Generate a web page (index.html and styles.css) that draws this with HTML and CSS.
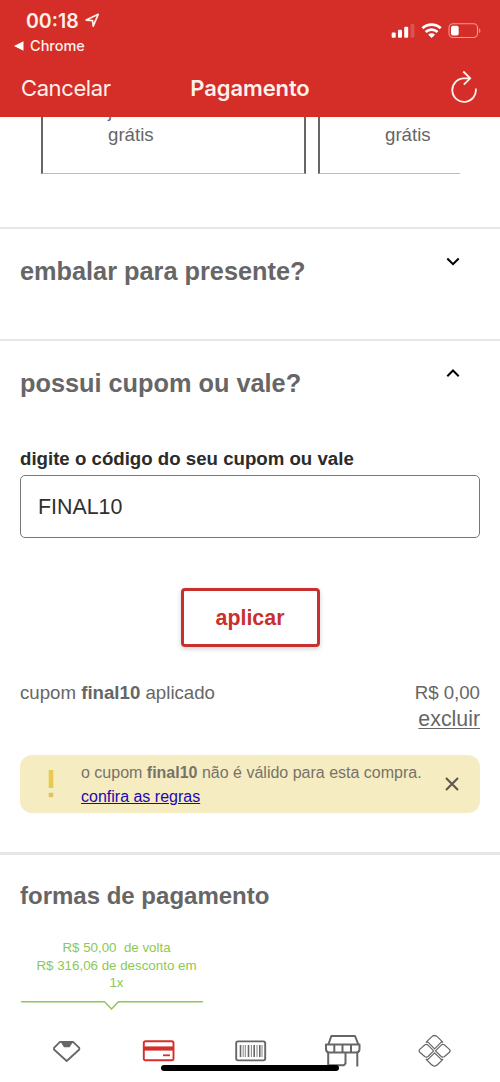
FILE: index.html
```html
<!DOCTYPE html>
<html lang="pt-BR">
<head>
<meta charset="utf-8">
<meta name="viewport" content="width=device-width, initial-scale=1">
<title>Pagamento</title>
<link rel="stylesheet" href="styles.css">
</head>
<body>
<div class="screen">
  <header class="header">
    <div class="status">
      <div class="status-left">
        <div class="clock"><span>00:18</span>
          <svg width="15" height="15" viewBox="0 0 15 15"><path d="M1.2 7.1 13.2 1.3 8.2 13.2 7.6 7.6Z" fill="none" stroke="#fff0e6" stroke-width="1.7" stroke-linejoin="round"/></svg>
        </div>
        <div class="back-app">
          <svg width="10" height="10" viewBox="0 0 10 10"><path d="M0 5 9.5 .2v9.6Z" fill="#fff"/></svg>
          <span>Chrome</span>
        </div>
      </div>
      <svg class="status-icons" width="90" height="18" viewBox="391 22 90 18">
        <g fill="#fff"><rect x="391.7" y="32.5" width="4" height="5.3" rx="1"/><rect x="398" y="29.7" width="4" height="8.1" rx="1"/><rect x="404.2" y="26.7" width="4" height="11.1" rx="1"/><rect x="410.5" y="24" width="4" height="13.8" rx="1" opacity=".18"/></g>
        <g fill="none" stroke="#fff" stroke-width="2.7"><path d="M422.5 28.3a13 13 0 0 1 18.2 0M425.7 32a8.4 8.4 0 0 1 11.8 0"/></g>
        <path d="M428.2 34.7a4.8 4.8 0 0 1 6.8 0l-3.4 3.4Z" fill="#fff"/>
        <rect x="449" y="23.8" width="28.5" height="13.7" rx="4" fill="none" stroke="#ee9b96" stroke-width="1.1"/>
        <rect x="451" y="25.8" width="7.7" height="9.8" rx="2" fill="#fff"/><path d="M479.3 28.6q1.7 2 0 4Z" fill="#ee9b96" stroke="#ee9b96" stroke-width=".6"/>
      </svg>
    </div>
    <nav class="navbar">
      <span class="cancel">Cancelar</span>
      <h1>Pagamento</h1>
      <svg class="reload" width="28" height="34" viewBox="450 69 28 34"><path d="M470.2 78.3H463.8A11.8 11.8 0 1 0 475.8 88.5M463.3 71.5 470.2 78.3 463.8 84.7" fill="none" stroke="#fff4ed" stroke-width="1.8"/></svg>
    </nav>
  </header>

  <section class="shipping">
    <div class="ship-card"><span>j<br>grátis</span></div>
    <div class="ship-card next"><span>&nbsp;<br>grátis</span></div>
  </section>

  <section class="accordion gift">
    <h2>embalar para presente?</h2>
    <svg class="chevron" width="14" height="9" viewBox="0 0 14 9"><path d="M1.3 1.5 7 7.2l5.7-5.7" fill="none" stroke="#000" stroke-width="2"/></svg>
  </section>

  <section class="coupon">
    <div class="accordion">
      <h2>possui cupom ou vale?</h2>
      <svg class="chevron" width="14" height="9" viewBox="0 0 14 9"><path d="M1.3 7.2 7 1.5l5.7 5.7" fill="none" stroke="#000" stroke-width="2"/></svg>
    </div>
    <div class="label">digite o código do seu cupom ou vale</div>
    <div class="input">FINAL10</div>
    <div class="apply">aplicar</div>
    <div class="applied">
      <div>cupom <b>final10</b> aplicado</div>
      <div class="amount">R$ 0,00<br><span class="remove">excluir</span></div>
    </div>
    <div class="alert">
      <svg class="bang" width="6" height="28" viewBox="0 0 6 28"><path d="M.7 0h4.6v18H.7Z" fill="#e8cb4c"/><path d="M.7 22.8h4.6v4.4H.7Z" fill="#dfc45c"/></svg>
      <div class="alert-text">o cupom <b>final10</b> não é válido para esta compra.<br><a href="#">confira as regras</a></div>
      <svg class="close" width="14" height="14" viewBox="0 0 14 14"><path d="m1 1 12 12M13 1 1 13" stroke="#5e5a50" stroke-width="2.2"/></svg>
    </div>
  </section>

  <section class="payment">
    <h2>formas de pagamento</h2>
    <div class="offer">
      <p>R$ 50,00&nbsp; de volta<br>R$ 316,06 de desconto em<br>1x</p>
      <svg width="184" height="10" viewBox="0 0 184 10"><path d="M1 1.8H84.5L91.5 9 98.5 1.8H183" fill="none" stroke="#8cc855" stroke-width="1.4"/></svg>
    </div>
    <div class="methods">
      <svg viewBox="44 1030 46 42"><path d="M61 1041.8H73L79.3 1047.8V1049.5L66.7 1061 54 1049.5V1047.8L60 1041.8Z" fill="none" stroke="#666" stroke-width="1.8" stroke-linejoin="round"/><path d="M60.5 1041.8H73.2L69.5 1047.3H64Z" fill="#666"/></svg>
      <svg viewBox="136 1030 46 42"><rect x="143.8" y="1041.3" width="29.7" height="19" rx="1.8" fill="none" stroke="#d52f2b" stroke-width="1.9"/><path d="M143.5 1046.4H174V1050.6H143.5Z" fill="#d52f2b"/><path d="M163 1055.3H170" stroke="#d52f2b" stroke-width="1.8"/></svg>
      <svg viewBox="228 1030 46 42"><rect x="236.2" y="1041.4" width="29" height="19" rx="1.8" fill="none" stroke="#666" stroke-width="1.9"/><path d="M240.5 1045V1057M248.5 1045V1057M254.2 1045V1057M259.8 1045V1057" stroke="#666" stroke-width="1.6"/><path d="M243.2 1045V1057M245.3 1045V1057M251.4 1045V1057M257 1045V1057M262 1045V1057" stroke="#666" stroke-width=".8"/></svg>
      <svg viewBox="320 1030 46 42"><g fill="none" stroke="#666" stroke-width="2" stroke-linejoin="round"><path d="M328.5 1044.3 331.3 1036H355L358.3 1044.3"/><path d="M326 1044.5H359.5V1049.5Q359 1052.5 356 1052.5H329.5Q326.5 1052.5 326 1049.5ZM334.3 1044.5V1052.3M342.5 1044.5V1052.3M351 1044.5V1052.3"/><path d="M328.2 1052.5V1065.2H343.8L345.5 1063.5V1052.5M357.3 1052.5V1066.5"/></g></svg>
      <svg viewBox="412 1030 46 42"><g fill="none" stroke="#666" stroke-width="1.2" stroke-linejoin="round"><path d="M426.2 1042.2 431.3 1037.1Q434.5 1033.9 437.7 1037.1L442.8 1042.2H441.2L434.6 1048.8 428 1042.2Z"/><path d="M426.2 1059.4 431.3 1064.5Q434.5 1067.7 437.7 1064.5L442.8 1059.4H441.2L434.6 1052.8 428 1059.4Z"/><path d="M433.7 1050.8 428 1056.5Q426.8 1057.6 425 1056.8L420 1052.5Q418.3 1050.8 420 1049.1L425 1044.8Q426.8 1044 428 1045.1Z"/><path d="M435.5 1050.8 441.2 1056.5Q442.4 1057.6 444.2 1056.8L449.2 1052.5Q450.9 1050.8 449.2 1049.1L444.2 1044.8Q442.4 1044 441.2 1045.1Z"/></g></svg>
    </div>
  </section>
  <div class="home-indicator"></div>
</div>
</body>
</html>
```
FILE: styles.css
```css
* { box-sizing: border-box; }
body { margin: 0; background: #fff; }
h1, h2, p { margin: 0; }
svg { display: block; flex: none; }

.screen {
  position: relative;
  width: 500px;
  height: 1082px;
  overflow: hidden;
  background: #fff;
  color: #666;
  font-family: "Liberation Sans", Arial, sans-serif;
  font-size: 18.67px;
}

.header {
  height: 117px;
  background: #d52d28;
  color: #fff0e9;
  font-family: Inter, sans-serif;
}
.status { display: flex; justify-content: space-between; height: 59px; padding: 10px 19px 0 14px; }
.clock { display: flex; align-items: center; gap: 6px; height: 22px; padding-left: 12px; font-size: 19.5px; font-weight: 600; }
.clock svg { margin-top: -2px; }
.back-app { display: flex; align-items: center; gap: 6px; height: 27px; font-size: 14.5px; font-weight: 500; }
.status-icons { margin-top: 12px; }
.navbar { display: grid; grid-template-columns: 1fr auto 1fr; align-items: center; height: 57px; padding: 0 22px; font-size: 22px; }
.cancel { margin-left: -1px; letter-spacing: -.4px; }
.navbar h1 { font-size: 22px; font-weight: 600; letter-spacing: -.1px; }
.reload { justify-self: end; margin-bottom: 4px; }

.shipping {
  display: flex;
  gap: 12px;
  height: 57px;
  margin-left: 41px;
  width: 419px;
  overflow: hidden;
}
.ship-card {
  display: flex;
  align-items: flex-end;
  flex: none;
  width: 265px;
  height: 57px;
  padding: 0 0 26px 65px;
  border: solid #666;
  border-width: 0 2px 1px;
  border-bottom-color: #bbb;
  line-height: 24px;
}
.ship-card.next { width: 266px; }

.accordion { display: flex; justify-content: space-between; }
h2 { font-size: 25.3px; font-weight: 700; line-height: 30px; }
.chevron { margin-right: 20px; }
.gift { height: 112px; margin-top: 53px; padding: 27px 20px 0; border-top: 2px solid #e8e8e8; }
.gift .chevron { margin-top: 1px; }
.coupon { height: 513px; padding: 27px 20px 0; border-top: 2px solid #e8e8e8; }
.coupon .chevron { margin-top: 1px; }
.label { margin-top: 50px; color: #2b2b2b; font-weight: 700; line-height: 22px; }
.input {
  height: 63px;
  margin-top: 5px;
  padding-left: 17px;
  border: 1px solid #777;
  border-radius: 5px;
  color: #303030;
  font-size: 21.4px;
  line-height: 62px;
}
.apply {
  width: 139px;
  height: 59px;
  margin: 50px auto 0;
  border: 3px solid #c7302d;
  border-radius: 4px;
  box-shadow: 0 2px 5px rgba(0, 0, 0, .18);
  color: #c9302d;
  font-size: 21.4px;
  font-weight: 700;
  line-height: 55px;
  text-align: center;
}
.applied { display: flex; justify-content: space-between; height: 108px; padding-top: 33px; line-height: 26px; }
.amount { text-align: right; }
.remove { font-size: 21.33px; text-decoration: underline; text-decoration-thickness: 1px; text-underline-offset: 2px; }
.alert {
  display: flex;
  align-items: center;
  height: 58px;
  padding: 0 21px 0 28px;
  border-radius: 12px;
  background: #f6ecc2;
  color: #77736a;
  font-size: 16px;
  line-height: 24px;
}
.alert-text { flex: 1; padding: 2px 0 0 27px; white-space: nowrap; }
.alert-text a { color: #1c08b0; }
.close { margin-bottom: 1px; }

.payment { border-top: 3px solid #e6e6e6; padding: 26px 0 0 20px; }
.payment h2 { font-size: 24px; }
.offer { width: 184px; margin-top: 28px; color: #8cc855; font-size: 13.33px; line-height: 17.5px; }
.offer p { width: 190px; height: 60.5px; padding-left: 3px; text-align: center; white-space: nowrap; }
.methods { display: flex; justify-content: space-between; width: 414px; margin: 20px 0 0 24px; }
.methods svg { width: 46px; height: 42px; }
.home-indicator {
  position: absolute;
  left: 161px;
  top: 1065px;
  width: 178px;
  height: 6px;
  border-radius: 3px;
  background: #000;
}
```
